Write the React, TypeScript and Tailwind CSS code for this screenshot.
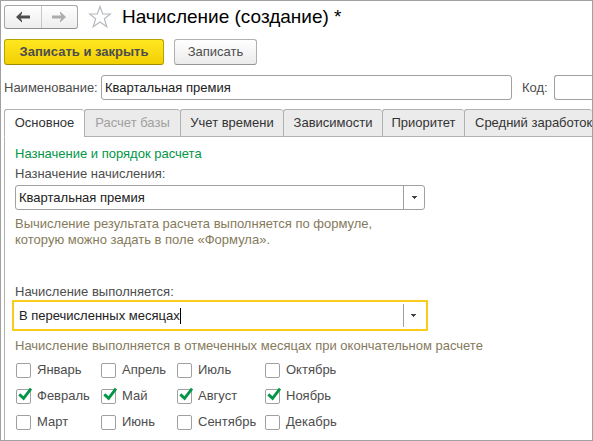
import { useState } from "react";
import clsx from "clsx";

const tabs = [
  { title: "Основное", width: "w-20" },
  { title: "Расчет базы", width: "w-24", disabled: true },
  { title: "Учет времени", width: "w-[103px]" },
  { title: "Зависимости", width: "w-[99px]" },
  { title: "Приоритет", width: "w-[82px]" },
  { title: "Средний заработок", width: "flex-1 pl-2.5 text-left" },
];

const monthColumns = [
  { width: "w-[85px]", months: ["Январь", "Февраль", "Март"] },
  { width: "w-[76px]", months: ["Апрель", "Май", "Июнь"] },
  { width: "w-[88px]", months: ["Июль", "Август", "Сентябрь"] },
  { width: "w-[88px]", months: ["Октябрь", "Ноябрь", "Декабрь"] },
];

const ArrowIcon = ({ className }: { className?: string }) => (
  <svg width="14" height="12" viewBox="0 0 14 12" className={className} fill="currentColor">
    <path d="M0 6 6 .6V2.6L4.6 4.6H14V7.4H4.6L6 9.4V11.4Z" />
  </svg>
);

const StarIcon = () => (
  <svg width="24" height="24" viewBox="0 0 24 24" fill="#fff" stroke="#b4bac0" strokeWidth="1.2">
    <path d="M12 1.5 14.7 9H22.5L16.3 13.8 18.8 21.8 12 17 5.2 21.8 7.7 13.8 1.5 9H9.3Z" />
  </svg>
);

const DropIcon = () => (
  <svg width="5" height="3" viewBox="0 0 5 3" fill="#444" shapeRendering="crispEdges">
    <path d="M0 0h5v1H4v1H3v1H2V2H1V1H0Z" />
  </svg>
);

const CheckMark = () => (
  <svg
    width="15"
    height="15"
    viewBox="0 0 15 15"
    className="pointer-events-none absolute inset-0 hidden overflow-visible peer-checked:block"
    fill="none"
    stroke="#009646"
    strokeWidth="2.8"
  >
    <path d="M3.3 5.4 7.6 9.4 15 -.3" />
  </svg>
);

const MonthCheckbox = ({ name, defaultChecked }: { name: string; defaultChecked: boolean }) => (
  <label className="flex h-[26px] items-center gap-1.5">
    <span className="relative block size-[15px]">
      <input
        type="checkbox"
        defaultChecked={defaultChecked}
        className="peer block size-[15px] appearance-none rounded-[2px] border border-[#a0a0a0] bg-white"
      />
      <CheckMark />
    </span>
    {name}
  </label>
);

const App = () => {
  const [activeTab, setActiveTab] = useState("Основное");
  const [period, setPeriod] = useState("В перечисленных месяцах");
  const checkedMonths = ["Февраль", "Май", "Август", "Ноябрь"];

  return (
    <div className="flex min-h-screen flex-col overflow-hidden border border-[#a0a0a0] bg-white pl-[3px] font-['Liberation_Sans',Arial,sans-serif] text-[13px] leading-4 text-[#4d4d4d]">
      <header className="flex h-8 items-center">
        <div className="flex h-6 w-[74px] rounded-[3px] border border-[#a8a8a8] border-b-[#909090] bg-linear-to-b from-white to-[#ededed]">
          <button aria-label="Назад" className="flex flex-1 items-center justify-center border-r border-[#c8c8c8]">
            <ArrowIcon className="text-[#4d4d4d]" />
          </button>
          <button aria-label="Вперед" className="flex flex-1 items-center justify-center">
            <ArrowIcon className="rotate-180 text-[#acacac]" />
          </button>
        </div>
        <button aria-label="Избранное" className="ml-2.5">
          <StarIcon />
        </button>
        <h1 className="ml-2.5 text-[19px] leading-6 text-black">Начисление (создание) *</h1>
      </header>

      <div className="mt-1.5 flex gap-2.5">
        <button className="h-[26px] w-40 rounded-[3px] border border-[#b8a000] border-b-[#a08b00] bg-linear-to-b from-[#ffe71f] to-[#f2d000] font-bold">
          Записать и закрыть
        </button>
        <button className="h-[26px] w-[83px] rounded-[3px] border border-[#b0b0b0] border-b-[#969696] bg-linear-to-b from-white to-[#ebebeb]">
          Записать
        </button>
      </div>

      <div className="mt-2.5 flex items-center">
        <label htmlFor="name" className="w-[97px]">
          Наименование:
        </label>
        <input
          id="name"
          defaultValue="Квартальная премия"
          className="h-[25px] min-w-0 flex-1 rounded-[3px] border border-[#a0a0a0] px-[3px] text-[#222] outline-none"
        />
        <label htmlFor="code" className="ml-2.5 w-8">
          Код:
        </label>
        <input id="code" className="h-[25px] w-[38px] rounded-l-[3px] border border-r-0 border-[#a0a0a0] px-1 outline-none" />
      </div>

      <div role="tablist" className="mt-[9px] flex h-7">
        {tabs.map((tab) => (
          <button
            key={tab.title}
            role="tab"
            aria-selected={tab.title === activeTab}
            disabled={tab.disabled}
            onClick={() => setActiveTab(tab.title)}
            className={clsx(
              "shrink-0 rounded-t-[3px] border-t border-b border-l border-[#b0b0b0] whitespace-nowrap",
              tab.width,
              tab.title === activeTab ? "border-b-white bg-white" : "bg-[#ebebeb]",
              tab.disabled ? "text-[#a0a0a0]" : "text-[#333]",
            )}
          >
            {tab.title}
          </button>
        ))}
      </div>

      <main className="flex-1 border-l border-[#b0b0b0] pt-[7px] pl-2.5">
        <h2 className="leading-5 text-[#009646]">Назначение и порядок расчета</h2>
        <label htmlFor="purpose" className="block leading-5">
          Назначение начисления:
        </label>
        <div className="mt-px grid h-[25px] w-[410px]">
          <select
            id="purpose"
            className="col-start-1 row-start-1 appearance-none rounded-[3px] border border-[#a0a0a0] px-[3px] text-[#222] outline-none"
          >
            <option>Квартальная премия</option>
          </select>
          <span className="pointer-events-none col-start-1 row-start-1 flex w-[22px] items-center justify-center justify-self-end border-l border-[#a0a0a0]">
            <DropIcon />
          </span>
        </div>
        <p className="mt-1.5 text-[#857a5c]">
          Вычисление результата расчета выполняется по формуле,
          <br />
          которую можно задать в поле «Формула».
        </p>

        <label htmlFor="period" className="mt-9 block">
          Начисление выполняется:
        </label>
        <div className="-ml-[3px] flex h-[31px] w-[416px] items-center border-2 border-[#fbcb1c] pl-[5px]">
          <input
            id="period"
            role="combobox"
            aria-expanded="false"
            value={period}
            onChange={(e) => setPeriod(e.target.value)}
            className="field-sizing-content text-[#222] outline-none"
          />
          <span className="h-4 w-px bg-black" />
          <button
            aria-label="Выбрать"
            className="ml-auto flex h-[23px] w-[23px] items-center border-l border-[#a0a0a0] pl-[7px]"
          >
            <DropIcon />
          </button>
        </div>
        <p className="mt-[7px] text-[#857a5c]">Начисление выполняется в отмеченных месяцах при окончательном расчете</p>
        <div className="mt-[3px] flex pl-px">
          {monthColumns.map((column) => (
            <div key={column.months[0]} className={column.width}>
              {column.months.map((month) => (
                <MonthCheckbox key={month} name={month} defaultChecked={checkedMonths.includes(month)} />
              ))}
            </div>
          ))}
        </div>
      </main>
    </div>
  );
};

export default App;
